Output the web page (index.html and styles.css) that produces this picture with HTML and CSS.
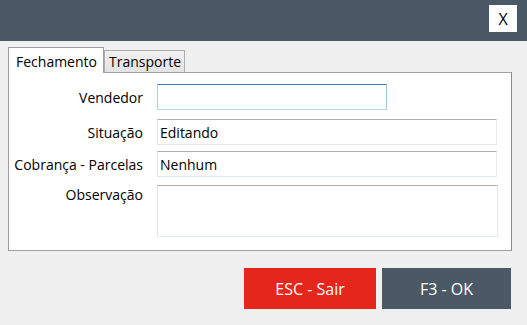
FILE: index.html
```html
<html>
 <head>
 <meta content="width=device-width, initial-scale=1" name="viewport" />
  <link rel="stylesheet" href="styles.css">
 </head>
 <body>
 <div class="titlebar">
  <button class="close">X</button>
 </div>
 <div class="tabs">
  <div class="tab active">Fechamento</div>
  <div class="tab">Transporte</div>
 </div>
 <div class="panel">
  <div class="row">
   <label>Vendedor</label>
   <input type="text" class="txt short focus">
  </div>
  <div class="row r2">
   <label>Situação</label>
   <input type="text" class="txt" value="Editando">
  </div>
  <div class="row r3">
   <label>Cobrança - Parcelas</label>
   <input type="text" class="txt" value="Nenhum">
  </div>
  <div class="row r4">
   <label class="top">Observação</label>
   <textarea class="txt memo"></textarea>
  </div>
 </div>
 <div class="actions">
  <button class="btn sair">ESC - Sair</button>
  <button class="btn ok">F3 - OK</button>
 </div>
 </body>
</html>
```

FILE: styles.css
```css
body{
  margin:0;
  padding:0;
  background-color: #f0f0f0;
  font-family: "Open Sans", "Noto Sans", sans-serif;
  font-size: 14px;
  color: #000;
}
.titlebar{
  height: 41px;
  background-color: #4b5966;
  display: flex;
  justify-content: flex-end;
  align-items: flex-start;
}
.close{
  margin: 5px 10px 0 0;
  width: 28px;
  height: 27px;
  border: none;
  background: #fff;
  font-family: "Open Sans", sans-serif;
  font-size: 16px;
  padding: 0;
  color: #000;
}
.tabs{
  display: flex;
  align-items: flex-end;
  margin: 6px 0 0 8px;
  height: 25px;
}
.tab{
  height: 22px;
  line-height: 21px;
  padding: 0 3px 0 4px;
  border: 1px solid #adadad;
  border-bottom: none;
  background: linear-gradient(#f0f0f0, #e3e3e3);
  box-sizing: border-box;
  font-size: 14px;
}
.tab.active{
  height: 26px;
  width: 96px;
  padding: 0 0 0 7px;
  line-height: 27px;
  background: #fff;
  position: relative;
  z-index: 1;
  margin-bottom: -1px;
  border-color: #a0a0a0;
}
.panel{
  margin-left: 8px;
  width: 504px;
  height: 179px;
  box-sizing: border-box;
  background: #fff;
  border: 1px solid #a0a0a0;
  border-right-color: #8a8a8a;
  padding-top: 11px;
}
.row{
  display: flex;
  align-items: center;
}
.r2{ margin-top: 9px; }
.r3{ margin-top: 6px; }
.r4{ margin-top: 8px; align-items: flex-start; }
.row label{
  width: 134px;
  text-align: right;
  margin-right: 14px;
  font-size: 14px;
}
.row label.top{
  margin-top: 0;
}
.txt{
  width: 340px;
  height: 26px;
  box-sizing: border-box;
  border: 1px solid;
  border-color: #abadb3 #e3e9ef #e3e9ef #e2e3ea;
  font-family: "Open Sans", "Noto Sans", sans-serif;
  font-size: 14px;
  padding: 0 2px;
  margin: 0;
  color: #000;
  outline: none;
}
.txt.short{
  width: 230px;
}
.txt.focus{
  border-color: #3d7bad #a4c9e3 #b7d9ed #b5cfe7;
}
.memo{
  width: 341px;
  height: 52px;
  resize: none;
}
.actions{
  display: flex;
  justify-content: flex-end;
  gap: 6px;
  margin: 17px 16px 0 0;
}
.btn{
  height: 41px;
  border: none;
  color: #fff;
  font-family: "Open Sans", "Noto Sans", sans-serif;
  font-size: 16px;
  padding: 0;
}
.sair{
  width: 132px;
  background-color: #e5261b;
}
.ok{
  width: 129px;
  background-color: #4b5966;
}
```
